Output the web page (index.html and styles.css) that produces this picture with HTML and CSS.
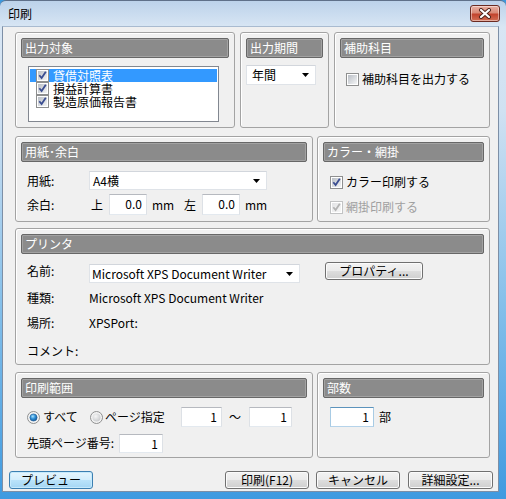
FILE: index.html
```html
<!DOCTYPE html>
<html lang="ja">
<head>
<meta charset="utf-8">
<title>印刷</title>
<link rel="stylesheet" href="styles.css">
</head>
<body>
<div class="window">
  <div class="titlebar">
    <span class="title">印刷</span>
    <div class="close">
      <svg width="14" height="11" viewBox="0 0 14 11">
        <path d="M3 2 L11 9 M11 2 L3 9" stroke="#4a2018" stroke-width="4" stroke-linecap="round"/>
        <path d="M3 2 L11 9 M11 2 L3 9" stroke="#ffffff" stroke-width="2.2" stroke-linecap="round"/>
      </svg>
    </div>
  </div>
  <div class="client">
    <div class="row r1">
      <section class="group g-target">
        <div class="ghead">出力対象</div>
        <div class="listbox">
          <div class="item sel">
            <svg class="cb" width="13" height="13" viewBox="0 0 13 13">
              <defs>
                <linearGradient id="cbfill" x1="0" y1="0" x2="1" y2="1"><stop offset="0" stop-color="#b9bec5"/><stop offset="1" stop-color="#f4f5f6"/></linearGradient>
                <linearGradient id="cbdis" x1="0" y1="0" x2="1" y2="1"><stop offset="0" stop-color="#e2e3e5"/><stop offset="1" stop-color="#f7f7f7"/></linearGradient>
                <radialGradient id="rdot" cx="0.4" cy="0.35" r="0.75"><stop offset="0" stop-color="#a8e4ff"/><stop offset="0.45" stop-color="#2f8fd6"/><stop offset="1" stop-color="#0c4a8a"/></radialGradient>
                <radialGradient id="rgray" cx="0.4" cy="0.35" r="0.75"><stop offset="0" stop-color="#f6f6f6"/><stop offset="1" stop-color="#c4c6c9"/></radialGradient>
              </defs>
              <rect x=".5" y=".5" width="12" height="12" fill="#fff" stroke="#8e8f8f"/>
              <rect x="2" y="2" width="9" height="9" fill="url(#cbfill)"/>
              <path d="M3.3 6.2 L5.6 9 L9.8 2.8" fill="none" stroke="#3a4d91" stroke-width="1.8"/>
            </svg>
            <span class="itext">貸借対照表</span>
          </div>
          <div class="item">
            <svg class="cb" width="13" height="13" viewBox="0 0 13 13">
              <rect x=".5" y=".5" width="12" height="12" fill="#fff" stroke="#8e8f8f"/>
              <rect x="2" y="2" width="9" height="9" fill="url(#cbfill)"/>
              <path d="M3.3 6.2 L5.6 9 L9.8 2.8" fill="none" stroke="#3a4d91" stroke-width="1.8"/>
            </svg>
            <span class="itext">損益計算書</span>
          </div>
          <div class="item">
            <svg class="cb" width="13" height="13" viewBox="0 0 13 13">
              <rect x=".5" y=".5" width="12" height="12" fill="#fff" stroke="#8e8f8f"/>
              <rect x="2" y="2" width="9" height="9" fill="url(#cbfill)"/>
              <path d="M3.3 6.2 L5.6 9 L9.8 2.8" fill="none" stroke="#3a4d91" stroke-width="1.8"/>
            </svg>
            <span class="itext">製造原価報告書</span>
          </div>
        </div>
      </section>
      <section class="group g-period">
        <div class="ghead">出力期間</div>
        <div class="combo c-period">
          <span>年間</span>
          <svg class="arr" width="7" height="4" viewBox="0 0 7 4"><polygon points="0,0 7,0 3.5,4" fill="#000"/></svg>
        </div>
      </section>
      <section class="group g-sub">
        <div class="ghead">補助科目</div>
        <div class="check c-sub">
          <svg class="cb" width="13" height="13" viewBox="0 0 13 13">
            <rect x=".5" y=".5" width="12" height="12" fill="#fff" stroke="#8e8f8f"/>
            <rect x="2" y="2" width="9" height="9" fill="url(#cbfill)"/>
          </svg>
          <span>補助科目を出力する</span>
        </div>
      </section>
    </div>

    <div class="row r2">
      <section class="group g-paper">
        <div class="ghead">用紙･余白</div>
        <div class="frow fr-paper">
          <span class="lbl">用紙:</span>
          <div class="combo c-paper">
            <span>A4横</span>
            <svg class="arr" width="7" height="4" viewBox="0 0 7 4"><polygon points="0,0 7,0 3.5,4" fill="#000"/></svg>
          </div>
        </div>
        <div class="frow fr-margin">
          <span class="lbl">余白:</span>
          <span class="side s-top">上</span>
          <div class="field f-margin">0.0</div>
          <span class="unit">mm</span>
          <span class="side s-left">左</span>
          <div class="field f-margin">0.0</div>
          <span class="unit">mm</span>
        </div>
      </section>
      <section class="group g-color">
        <div class="ghead">カラー・網掛</div>
        <div class="check c-color">
          <svg class="cb" width="13" height="13" viewBox="0 0 13 13">
            <rect x=".5" y=".5" width="12" height="12" fill="#fff" stroke="#8e8f8f"/>
            <rect x="2" y="2" width="9" height="9" fill="url(#cbfill)"/>
            <path d="M3.3 6.2 L5.6 9 L9.8 2.8" fill="none" stroke="#3a4d91" stroke-width="1.8"/>
          </svg>
          <span>カラー印刷する</span>
        </div>
        <div class="check c-shade disabled">
          <svg class="cb" width="13" height="13" viewBox="0 0 13 13">
            <rect x=".5" y=".5" width="12" height="12" fill="#fff" stroke="#c2c3c4"/>
            <rect x="2" y="2" width="9" height="9" fill="url(#cbdis)"/>
            <path d="M3.3 6.2 L5.6 9 L9.8 2.8" fill="none" stroke="#b3b3b3" stroke-width="1.8"/>
          </svg>
          <span>網掛印刷する</span>
        </div>
      </section>
    </div>

    <div class="row r3">
      <section class="group g-printer">
        <div class="ghead">プリンタ</div>
        <div class="prow pr-name">
          <span class="lbl">名前:</span>
          <div class="combo c-printer">
            <span>Microsoft XPS Document Writer</span>
            <svg class="arr" width="7" height="4" viewBox="0 0 7 4"><polygon points="0,0 7,0 3.5,4" fill="#000"/></svg>
          </div>
          <div class="btn b-prop">プロパティ...</div>
        </div>
        <div class="prow pr-type">
          <span class="lbl">種類:</span>
          <span>Microsoft XPS Document Writer</span>
        </div>
        <div class="prow pr-place">
          <span class="lbl">場所:</span>
          <span>XPSPort:</span>
        </div>
        <div class="prow pr-comment">
          <span class="lbl">コメント:</span>
        </div>
      </section>
    </div>

    <div class="row r4">
      <section class="group g-range">
        <div class="ghead">印刷範囲</div>
        <div class="rrow">
          <svg class="rd" width="13" height="13" viewBox="0 0 13 13">
            <circle cx="6.5" cy="6.5" r="6" fill="#f4f4f4" stroke="#8e8f8f"/>
            <circle cx="6.5" cy="6.5" r="3.6" fill="url(#rdot)" stroke="#1f5a94" stroke-width=".6"/>
          </svg>
          <span class="rl rl-all">すべて</span>
          <svg class="rd" width="13" height="13" viewBox="0 0 13 13">
            <circle cx="6.5" cy="6.5" r="6" fill="#f4f4f4" stroke="#8e8f8f"/>
            <circle cx="6.5" cy="6.5" r="4" fill="url(#rgray)"/>
          </svg>
          <span class="rl rl-page">ページ指定</span>
          <div class="field f-from">1</div>
          <span class="tilde">～</span>
          <div class="field f-to">1</div>
        </div>
        <div class="rrow2">
          <span class="lbl lbl-start">先頭ページ番号:</span>
          <div class="field f-start">1</div>
        </div>
      </section>
      <section class="group g-copies">
        <div class="ghead">部数</div>
        <div class="crow">
          <div class="field f-copies">1</div>
          <span class="unit u-copies">部</span>
        </div>
      </section>
    </div>

    <div class="buttons">
      <div class="btn b-default">プレビュー</div>
      <div class="btn b-print">印刷(F12)</div>
      <div class="btn b-cancel">キャンセル</div>
      <div class="btn b-detail">詳細設定...</div>
    </div>
  </div>
</div>
</body>
</html>
```

FILE: styles.css
```css
* {
  box-sizing: border-box;
  margin: 0;
  padding: 0;
}

html, body {
  width: 506px;
  height: 499px;
  overflow: hidden;
}

body {
  font-family: "Noto Sans CJK JP", "Noto Sans", sans-serif;
  font-size: 12px;
  line-height: 14px;
  color: #000;
  background: #3d98dd;
}

.window {
  width: 506px;
  height: 499px;
  display: flex;
  flex-direction: column;
  border-top: 1px solid #5f7089;
  border-radius: 6px 6px 0 0;
  background: linear-gradient(180deg, #bcd2ea 0, #d8e6f4 26px, #d0e1f2 110px, #86c0ea 300px, #3e9ae0 499px);
}

.titlebar {
  height: 25px;
  display: flex;
  justify-content: space-between;
  padding: 0 6px 0 8px;
  flex: none;
}

.title {
  align-self: center;
  font-size: 12px;
  line-height: 14px;
  color: #000;
}

.close {
  margin-top: 4px;
  width: 30px;
  height: 17px;
  border: 1px solid #6b2b22;
  border-radius: 3px;
  background: linear-gradient(180deg, #eab0a2 0, #d98a77 45%, #c2442e 55%, #d36f55 100%);
  box-shadow: inset 0 0 0 1px rgba(255, 255, 255, 0.45);
  display: flex;
  align-items: center;
  justify-content: center;
}

.client {
  flex: none;
  height: 466px;
  margin: 0 7px 0 2px;
  background: #f0f0f0;
  border: 1px solid #7d8fa6;
  border-top-color: #a9bbd0;
  padding: 5px 0 0 12px;
}

.row {
  display: flex;
  align-items: flex-start;
}

.r1 { height: 96px; }
.r2 { height: 86px; margin-top: 8px; }
.r3 { height: 137px; margin-top: 6px; }
.r4 { height: 86px; margin-top: 7px; }

.group {
  height: 100%;
  border: 1px solid #a3a3a3;
  border-radius: 3px;
  box-shadow: inset 1px 1px 0 #ffffff;
  padding: 5px;
  flex: none;
}

.g-target { width: 220px; }
.g-period { width: 89px; margin-left: 5px; }
.g-sub { width: 156px; margin-left: 5px; }
.g-paper { width: 298px; }
.g-color { width: 173px; margin-left: 4px; }
.g-printer { width: 475px; }
.g-range { width: 298px; }
.g-copies { width: 173px; margin-left: 4px; }

.ghead {
  height: 20px;
  background: #8b8b8b;
  border: 1px solid #676767;
  border-radius: 2px;
  box-shadow: inset 0 0 0 1px #a2a2a2;
  color: #fff;
  padding-left: 3px;
  line-height: 18px;
  white-space: nowrap;
}

/* list box */
.listbox {
  width: 191px;
  height: 56px;
  margin: 8px 0 0 7px;
  background: #fff;
  border: 1px solid #828790;
  padding: 2px 1px 0 1px;
}

.item {
  height: 13px;
  display: flex;
  align-items: center;
  padding-left: 6px;
  line-height: 13px;
  white-space: nowrap;
}

.item.sel {
  background: #3399ff;
  color: #fff;
}

.itext {
  display: block;
  height: 13px;
  line-height: 13px;
  margin-left: 4px;
}

.cb, .rd, .arr {
  display: block;
  flex: none;
}

/* combo boxes */
.combo {
  display: flex;
  align-items: center;
  justify-content: space-between;
  height: 20px;
  background: #fff;
  border: 1px solid #dfe3e8;
  border-top-color: #d2d6dc;
  padding: 0 6px 0 3px;
  white-space: nowrap;
}

.c-period { width: 70px; margin-top: 7px; padding-left: 5px; }
.c-paper { width: 178px; height: 19px; }
.c-printer { width: 211px; height: 19px; padding-left: 2px; }

/* check boxes */
.check {
  display: flex;
  align-items: center;
  height: 14px;
  white-space: nowrap;
}

.check span { margin-left: 3px; }
.check.disabled { color: #a0a0a0; }

.c-sub { margin: 14px 0 0 6px; }
.c-color { margin: 13px 0 0 7px; }
.c-shade { margin: 11px 0 0 7px; }

/* form rows */
.frow, .prow, .rrow, .rrow2, .crow {
  display: flex;
  align-items: center;
  white-space: nowrap;
}

.lbl {
  width: 62px;
  margin-left: 6px;
  flex: none;
}

.fr-paper { margin-top: 9px; height: 19px; }
.fr-margin { margin-top: 4px; height: 21px; }

.side { width: 12px; flex: none; }
.s-top { margin-left: 2px; }
.s-left { margin-left: 16px; }

.field {
  height: 20px;
  background: #fff;
  border: 1px solid;
  border-color: #b6b9bf #dde1e6 #e3e9ef #dde1e6;
  text-align: right;
  padding-right: 4px;
  line-height: 17px;
  flex: none;
}

.f-margin { width: 38px; height: 21px; margin-left: 6px; }
.unit { margin-left: 5px; width: 16px; flex: none; }

.pr-name { margin-top: 10px; height: 19px; align-items: flex-start; }
.b-prop { width: 98px; margin-left: 25px; margin-top: -2px; }
.pr-type { margin-top: 5px; height: 20px; }
.pr-place { margin-top: 5px; height: 20px; }
.pr-comment { margin-top: 8px; height: 20px; }

.rrow { margin-top: 9px; height: 20px; }
.rrow .rd:first-child { margin-left: 6px; }
.rl-all { margin-left: 3px; width: 47px; flex: none; }
.rl-page { margin-left: 2px; width: 76px; flex: none; }
.f-from { width: 41px; }
.tilde { margin-left: 7px; width: 12px; flex: none; }
.f-to { width: 43px; margin-left: 8px; }

.rrow2 { margin-top: 6px; height: 20px; }
.lbl-start { width: 92px; }
.f-start { width: 44px; height: 19px; }

.crow { margin: 9px 0 0 7px; height: 20px; }
.f-copies { width: 44px; border-color: #5c93bc #a8cbe4 #b5d3ea #a8cbe4; }
.u-copies { margin-left: 5px; }

/* buttons */
.buttons {
  display: flex;
  margin: 13px 0 0 -6px;
  height: 18px;
}

.btn {
  height: 18px;
  border: 1px solid #707070;
  border-radius: 3px;
  background: linear-gradient(180deg, #f3f3f3 0, #ebebeb 48%, #dddddd 52%, #cfcfcf 100%);
  box-shadow: inset 0 0 0 1px #fbfbfb;
  text-align: center;
  line-height: 16px;
  white-space: nowrap;
  flex: none;
}

.b-default {
  width: 84px;
  border-color: #3c7fb1;
  background: linear-gradient(180deg, #e6f5fd 0, #d3eefc 48%, #bae3fa 52%, #a4d6f4 100%);
  box-shadow: inset 0 0 0 1px #c6eafc;
}

.b-print { width: 84px; margin-left: 132px; }
.b-cancel { width: 84px; margin-left: 7px; }
.b-detail { width: 85px; margin-left: 8px; }
```
